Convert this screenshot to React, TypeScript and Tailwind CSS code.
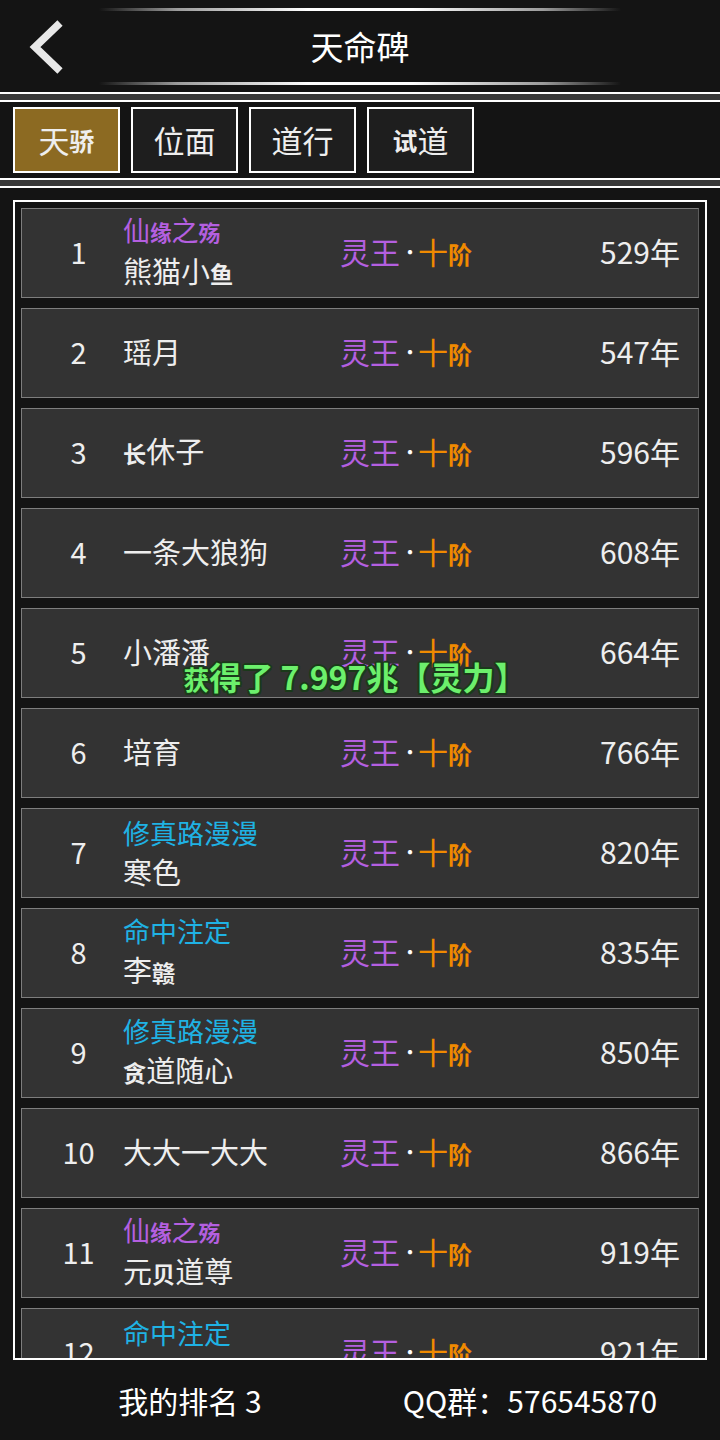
import React from "react";

const SMALL = "骄试缘殇鱼长赣贪贝阶获";

function T({ s }: { s: string }) {
  return (
    <>
      {Array.from(s).map((c, i) =>
        SMALL.includes(c) ? (
          <span key={i} className="text-[0.8em] font-bold">
            {c}
          </span>
        ) : (
          <span key={i}>{c}</span>
        )
      )}
    </>
  );
}

type Row = { r: number; t?: string; tc?: "p" | "c"; n: string; y: number };

const rows: Row[] = [
  { r: 1, t: "仙缘之殇", tc: "p", n: "熊猫小鱼", y: 529 },
  { r: 2, n: "瑶月", y: 547 },
  { r: 3, n: "长休子", y: 596 },
  { r: 4, n: "一条大狼狗", y: 608 },
  { r: 5, n: "小潘潘", y: 664 },
  { r: 6, n: "培育", y: 766 },
  { r: 7, t: "修真路漫漫", tc: "c", n: "寒色", y: 820 },
  { r: 8, t: "命中注定", tc: "c", n: "李赣", y: 835 },
  { r: 9, t: "修真路漫漫", tc: "c", n: "贪道随心", y: 850 },
  { r: 10, n: "大大一大大", y: 866 },
  { r: 11, t: "仙缘之殇", tc: "p", n: "元贝道尊", y: 919 },
  { r: 12, t: "命中注定", tc: "c", n: "\u00a0", y: 921 },
];

const lineStyle =
  "h-[3px] w-[522px] mx-auto bg-[linear-gradient(to_right,rgba(255,255,255,0),rgba(190,190,190,0.8)_15%,#ffffff_40%,#ffffff_60%,rgba(190,190,190,0.8)_85%,rgba(255,255,255,0))]";

function Sep() {
  return <div className="h-[10px] border-y-2 border-white bg-[#3a3a3a]" />;
}

export default function App() {
  return (
    <div
      className="relative w-[720px] h-[1440px] bg-[#141414] flex flex-col text-[#eeeeee] overflow-hidden"
      style={{ fontFamily: '"Noto Sans CJK SC", "Noto Sans", sans-serif' }}
    >
      {/* header */}
      <div className="h-[92px] flex flex-col pt-[8px]">
        <div className={lineStyle} />
        <div className="relative flex-1 flex items-center justify-center">
          <svg
            className="absolute left-[26px] top-[8px]"
            width="40"
            height="56"
            viewBox="0 0 40 56"
          >
            <polyline
              points="34,4 9,28 34,52"
              fill="none"
              stroke="#e8e8e8"
              strokeWidth="7.5"
            />
          </svg>
          <span className="text-[33px] leading-none text-white">天命碑</span>
        </div>
        <div className={lineStyle} />
        <div className="h-[7px]" />
      </div>
      <Sep />
      {/* tabs */}
      <div className="h-[77px] flex items-center gap-[11px] pl-[13px]">
        {["天骄", "位面", "道行", "试道"].map((t, i) => (
          <div
            key={t}
            className={`w-[107px] h-[66px] border-2 border-white flex items-center justify-center text-[31px] leading-none ${
              i === 0 ? "bg-[#8c6a22]" : "bg-[#1e1e1e]"
            }`}
          >
            <T s={t} />
          </div>
        ))}
      </div>
      <Sep />
      {/* list */}
      <div className="flex-1 pt-[12px] px-[13px] flex flex-col">
        <div className="h-[1160px] border-2 border-white bg-[#141414] p-[6px] overflow-hidden flex flex-col gap-[10px]">
          {rows.map((row) => (
            <div
              key={row.r}
              className="h-[90px] shrink-0 flex items-center pb-[3px] bg-[#333333] border border-[#7e7e7e] border-r-[#5c5c5c]"
            >
              <div className="w-[101px] pl-[12px] text-center text-[29px]">
                {row.r}
              </div>
              <div className="w-[217px] flex flex-col leading-[39px]">
                {row.t && (
                  <div
                    className={`text-[27px] ${
                      row.tc === "p" ? "text-[#b45fe0]" : "text-[#1fb2e4]"
                    }`}
                  >
                    <T s={row.t} />
                  </div>
                )}
                <div className="text-[29px]">
                  <T s={row.n} />
                </div>
              </div>
              <div className="flex-1 text-[30px] flex items-center">
                <span className="text-[#b45fe0]">灵王</span>
                <span className="text-white text-[20px] w-[18px] text-center">
                  ·
                </span>
                <span className="text-[#f08a00]">
                  <T s="十阶" />
                </span>
              </div>
              <div className="pr-[18px] text-[30px]">{row.y}年</div>
            </div>
          ))}
        </div>
      </div>
      {/* footer */}
      <div className="h-[80px] flex items-center text-[30px] text-white">
        <div className="w-1/2 pl-[20px] text-center">我的排名 3</div>
        <div className="w-1/2 pr-[20px] text-center">QQ群：576545870</div>
      </div>
      {/* toast */}
      <div
        className="absolute left-[-10px] right-0 top-[660px] text-center text-[32px] font-bold text-[#6cf06c] leading-none"
        style={{
          textShadow:
            "2px 0 0 #1a3a1a, -2px 0 0 #1a3a1a, 0 2px 0 #1a3a1a, 0 -2px 0 #1a3a1a, 1.5px 1.5px 0 #1a3a1a, -1.5px -1.5px 0 #1a3a1a, 1.5px -1.5px 0 #1a3a1a, -1.5px 1.5px 0 #1a3a1a",
        }}
      >
        <T s="获得了 7.997兆【灵力】" />
      </div>
    </div>
  );
}
